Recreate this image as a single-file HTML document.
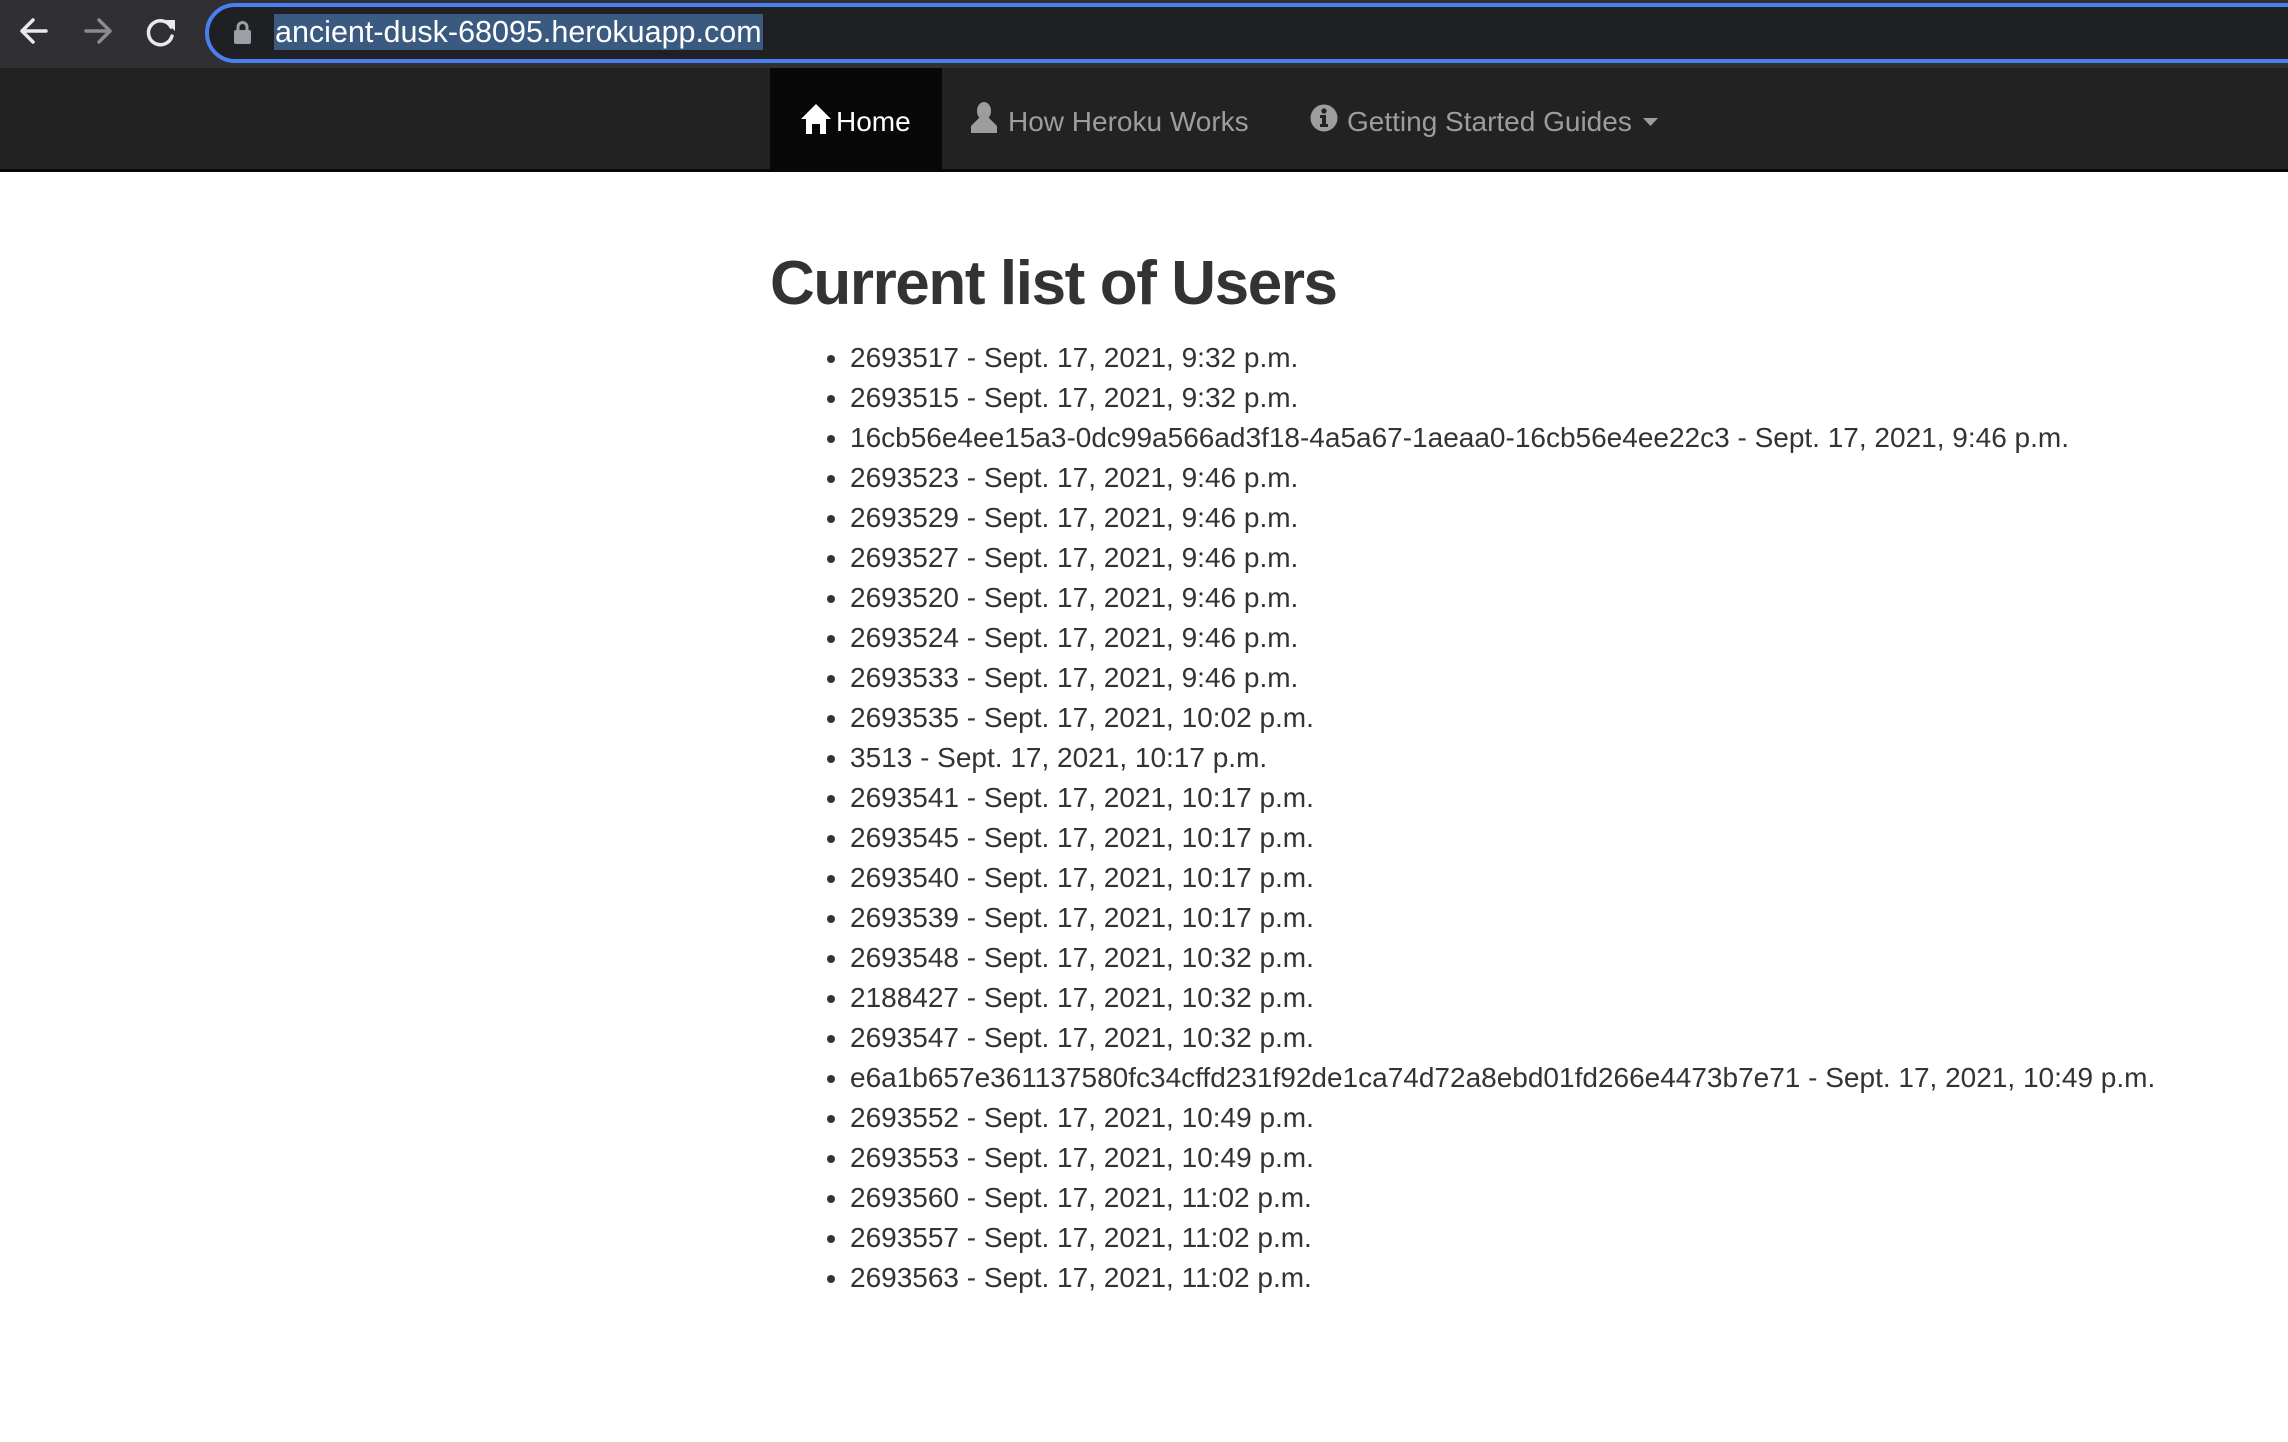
<!DOCTYPE html>
<html><head><meta charset="utf-8"><style>
*{margin:0;padding:0;box-sizing:border-box}
html,body{width:2288px;height:1442px;overflow:hidden;background:#fff;font-family:"Liberation Sans",Helvetica,Arial,sans-serif}
#tb{position:absolute;left:0;top:0;width:2288px;height:68px;background:#2f2f34}
#url{position:absolute;left:205px;top:3px;width:2200px;height:60px;border:4px solid #4a7ff0;border-radius:30px;background:#1f2023}
#sel{position:absolute;left:274px;top:14px;height:36px;background:#3b5a80;color:#fff;font-size:30.5px;line-height:36px;padding:0 1px}
#nav{position:absolute;left:0;top:68px;width:2288px;height:104px;background:#222;border-bottom:3px solid #080808}
#home{position:absolute;left:770px;top:68px;width:172px;height:101px;background:#080808}
.ni{position:absolute;top:102px;font-size:28px;line-height:40px;color:#9d9d9d}
h1{position:absolute;left:770px;top:250px;font-size:62px;line-height:68px;font-weight:bold;color:#333;white-space:nowrap;letter-spacing:-1.4px}
ul{position:absolute;left:770px;top:338px;padding-left:80px;font-size:28px;line-height:40px;color:#333;white-space:nowrap}
</style></head><body>
<div id="tb">
<svg width="200" height="68" style="position:absolute;left:0;top:0">
<g fill="none" stroke-width="3.5" stroke-linecap="round" stroke-linejoin="round">
<path d="M46 31H22M33 20L22 31L33 42" stroke="#e8eaed"/>
<path d="M86 31H110M99 20L110 31L99 42" stroke="#8a8b8f"/>
<path d="M171 27A12 12 0 1 0 172 36" stroke="#e8eaed"/>
</g>
<path d="M164 20L175 20L175 31Z" fill="#e8eaed"/>
</svg>
<div id="url"></div>
<svg width="20" height="26" style="position:absolute;left:233px;top:20px"><rect x="1" y="10" width="17" height="14" rx="2" fill="#9aa0a6"/><path d="M5 11V7a4.5 4.5 0 0 1 9 0v4" fill="none" stroke="#9aa0a6" stroke-width="3"/></svg>
<div id="sel">ancient-dusk-68095.herokuapp.com</div>
</div>
<div id="nav"></div>
<div id="home"></div>
<svg width="32" height="30" style="position:absolute;left:800px;top:104px"><path d="M16 0L31 15H26V30H20V20H12V30H6V15H1Z" fill="#fff"/></svg>
<div class="ni" style="left:836px;color:#fff">Home</div>
<svg width="28" height="32" style="position:absolute;left:970px;top:102px"><ellipse cx="14" cy="9" rx="7" ry="9" fill="#9d9d9d"/><path d="M9 16H19L27 24V31H1V24Z" fill="#9d9d9d"/></svg>
<div class="ni" style="left:1008px">How Heroku Works</div>
<svg width="28" height="28" style="position:absolute;left:1310px;top:104px"><circle cx="14" cy="14" r="13.5" fill="#9d9d9d"/><circle cx="14" cy="7" r="2.6" fill="#222"/><path d="M10 11H16V20H18V23H10V20H12V14H10Z" fill="#222"/></svg>
<div class="ni" style="left:1347px">Getting Started Guides</div>
<svg width="16" height="10" style="position:absolute;left:1643px;top:118px"><path d="M0 0H15L7.5 8Z" fill="#9d9d9d"/></svg>
<h1>Current list of Users</h1>
<ul>
<li>2693517 - Sept. 17, 2021, 9:32 p.m.</li>
<li>2693515 - Sept. 17, 2021, 9:32 p.m.</li>
<li>16cb56e4ee15a3-0dc99a566ad3f18-4a5a67-1aeaa0-16cb56e4ee22c3 - Sept. 17, 2021, 9:46 p.m.</li>
<li>2693523 - Sept. 17, 2021, 9:46 p.m.</li>
<li>2693529 - Sept. 17, 2021, 9:46 p.m.</li>
<li>2693527 - Sept. 17, 2021, 9:46 p.m.</li>
<li>2693520 - Sept. 17, 2021, 9:46 p.m.</li>
<li>2693524 - Sept. 17, 2021, 9:46 p.m.</li>
<li>2693533 - Sept. 17, 2021, 9:46 p.m.</li>
<li>2693535 - Sept. 17, 2021, 10:02 p.m.</li>
<li>3513 - Sept. 17, 2021, 10:17 p.m.</li>
<li>2693541 - Sept. 17, 2021, 10:17 p.m.</li>
<li>2693545 - Sept. 17, 2021, 10:17 p.m.</li>
<li>2693540 - Sept. 17, 2021, 10:17 p.m.</li>
<li>2693539 - Sept. 17, 2021, 10:17 p.m.</li>
<li>2693548 - Sept. 17, 2021, 10:32 p.m.</li>
<li>2188427 - Sept. 17, 2021, 10:32 p.m.</li>
<li>2693547 - Sept. 17, 2021, 10:32 p.m.</li>
<li>e6a1b657e361137580fc34cffd231f92de1ca74d72a8ebd01fd266e4473b7e71 - Sept. 17, 2021, 10:49 p.m.</li>
<li>2693552 - Sept. 17, 2021, 10:49 p.m.</li>
<li>2693553 - Sept. 17, 2021, 10:49 p.m.</li>
<li>2693560 - Sept. 17, 2021, 11:02 p.m.</li>
<li>2693557 - Sept. 17, 2021, 11:02 p.m.</li>
<li>2693563 - Sept. 17, 2021, 11:02 p.m.</li>
</ul>
</body></html>
